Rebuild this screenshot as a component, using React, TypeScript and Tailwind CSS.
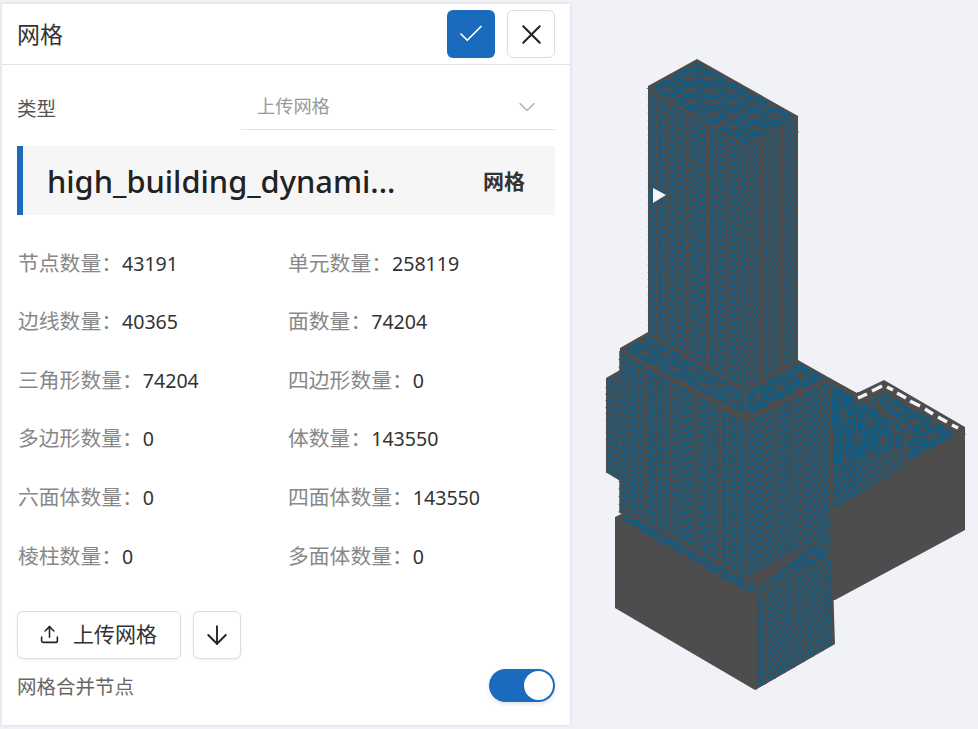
import { ArrowDown, Check, ChevronDown, Upload, X } from "lucide-react";

type P = [number, number];

const font = { fontFamily: '"Noto Sans", "Noto Sans CJK SC", sans-serif' };

const stats = [
  ["节点数量：", "43191", "单元数量：", "258119"],
  ["边线数量：", "40365", "面数量：", "74204"],
  ["三角形数量：", "74204", "四边形数量：", "0"],
  ["多边形数量：", "0", "体数量：", "143550"],
  ["六面体数量：", "0", "四面体数量：", "143550"],
  ["棱柱数量：", "0", "多面体数量：", "0"],
];

const at = (a: P, b: P, c: P, d: P, u: number, v: number): P => {
  const top: P = [a[0] + (b[0] - a[0]) * u, a[1] + (b[1] - a[1]) * u];
  const bot: P = [d[0] + (c[0] - d[0]) * u, d[1] + (c[1] - d[1]) * u];
  return [top[0] + (bot[0] - top[0]) * v, top[1] + (bot[1] - top[1]) * v];
};

const fmt = (p: P) => `${p[0].toFixed(1)} ${p[1].toFixed(1)}`;

// grid of triangles spread over a four sided face
function meshPath(a: P, b: P, c: P, d: P, nu: number, nv: number, uniform?: boolean) {
  let path = "";
  for (let i = 0; i < nu; i++) {
    for (let j = 0; j < nv; j++) {
      const p0 = at(a, b, c, d, i / nu, j / nv);
      const p1 = at(a, b, c, d, (i + 1) / nu, j / nv);
      const p2 = at(a, b, c, d, (i + 1) / nu, (j + 1) / nv);
      const p3 = at(a, b, c, d, i / nu, (j + 1) / nv);
      if (!uniform && (i + j) % 2 === 0) {
        path += `M${fmt(p0)}L${fmt(p1)}L${fmt(p2)}ZM${fmt(p0)}L${fmt(p2)}L${fmt(p3)}Z`;
      } else {
        path += `M${fmt(p0)}L${fmt(p1)}L${fmt(p3)}ZM${fmt(p1)}L${fmt(p2)}L${fmt(p3)}Z`;
      }
    }
  }
  return path;
}

function columnLines(a: P, b: P, c: P, d: P, n: number) {
  let path = "";
  for (let i = 1; i < n; i++) {
    path += `M${fmt(at(a, b, c, d, i / n, 0))}L${fmt(at(a, b, c, d, i / n, 1))}`;
  }
  return path;
}

function specks(a: P, b: P, c: P, d: P, nu: number, nv: number) {
  let path = "";
  for (let i = 1; i < nu; i++) {
    for (let j = 1; j < nv; j++) {
      const p = at(a, b, c, d, i / nu, j / nv);
      path += `M${fmt(p)}h1v1h-1Z`;
    }
  }
  return path;
}

function Face(props: { pts: P[]; nu: number; nv: number; cols?: number; sw?: number; uniform?: boolean }) {
  const [a, b, c, d] = props.pts;
  return (
    <g>
      <path d={meshPath(a, b, c, d, props.nu, props.nv, props.uniform)} fill="#0f5c85" stroke="#4d4d4d" strokeWidth={props.sw ?? 1.5} />
      {props.cols ? <path d={columnLines(a, b, c, d, props.cols)} stroke="#4d4d4d" strokeWidth={2} fill="none" /> : null}
    </g>
  );
}

function Building() {
  const gray = "#4d4d4d";
  const dashes: [P, P][] = [
    [[858, 398], [867, 394]],
    [[872, 391], [882, 386]],
    [[887, 387], [893, 390]],
    [[897, 393], [906, 398]],
    [[910, 401], [920, 406]],
    [[925, 409], [933, 414]],
    [[938, 417], [947, 422]],
    [[952, 425], [958, 428]],
  ];
  return (
    <svg viewBox="570 0 408 729" className="h-[729px] w-[408px] shrink-0">
      {/* back wing */}
      <polygon points="828,377 857,393 884,380 965,427 965,530 835,600 828,600" fill={gray} />
      <Face pts={[[866, 401], [884, 392], [958, 434], [908, 462]]} nu={3} nv={7} sw={1.6} />
      <Face pts={[[830, 383], [907, 428], [907, 447], [833, 466]]} nu={6} nv={3} sw={1.6} />
      <Face pts={[[833, 466], [907, 447], [907, 467], [833, 510]]} nu={9} nv={4} sw={1.4} uniform />
      <Face pts={[[910, 465], [958, 437], [935, 452], [910, 470]]} nu={6} nv={1} />
      <path d="M857 393L907 428V470M908 466L965 433" stroke={gray} strokeWidth={3} fill="none" />
      {dashes.map((s, i) => (
        <line key={i} x1={s[0][0]} y1={s[0][1]} x2={s[1][0]} y2={s[1][1]} stroke="#f4f5f8" strokeWidth={3.5} />
      ))}
      <path d={specks([833, 515], [965, 440], [965, 530], [835, 600], 16, 9)} fill="#2b5268" />

      {/* podium */}
      <polygon points="606,378 620,370 620,480 606,472" fill={gray} />
      <Face pts={[[607, 380], [620, 373], [620, 480], [607, 472]]} nu={2} nv={14} uniform />
      <polygon points="620,348 648,332 798,360 828,377 831,555 746,590 620,510" fill={gray} />
      <Face pts={[[622, 350], [648, 335], [746, 392], [746, 416]]} nu={3} nv={8} sw={1.6} />
      <Face pts={[[748, 416], [746, 392], [798, 362], [826, 378]]} nu={2} nv={6} sw={1.6} />
      <Face pts={[[620, 352], [746, 422], [746, 585], [620, 512]]} nu={14} nv={21} cols={5} uniform />
      <Face pts={[[746, 422], [830, 380], [831, 552], [746, 590]]} nu={9} nv={21} cols={3} uniform />

      {/* base block */}
      <polygon points="615,517 627,511 746,578 813,543 832,555 835,644 755,690 615,608" fill={gray} />
      <Face pts={[[618, 519], [628, 513], [757, 586], [750, 594]]} nu={1} nv={16} sw={1.5} />
      <Face pts={[[757, 587], [813, 544], [831, 555], [757, 596]]} nu={6} nv={2} sw={1.4} />
      <Face pts={[[757, 598], [832, 556], [833, 644], [757, 688]]} nu={8} nv={12} sw={1.4} uniform />
      <path d={specks([615, 521], [755, 598], [755, 690], [615, 608], 22, 12)} fill="#2b5268" />

      {/* tower */}
      <polygon points="648,86 697,59 798,116 798,360 746,392 648,333" fill={gray} />
      <Face pts={[[649, 88], [697, 61], [796, 117], [746, 146]]} nu={5} nv={9} sw={1.6} />
      <Face pts={[[649, 90], [746, 146], [746, 390], [649, 333]]} nu={13} nv={32} cols={5} uniform />
      <Face pts={[[746, 146], [797, 118], [797, 358], [746, 390]]} nu={7} nv={32} cols={3} uniform />
      <path d="M650 92L715 128L745 146L770 133M715 128L745 111M668 102L680 95" stroke={gray} strokeWidth={2} fill="none" />
      <line x1={746} y1={146} x2={746} y2={592} stroke={gray} strokeWidth={2} />
      <polygon points="653,188 666,195 653,203" fill="#f4f5f8" />
    </svg>
  );
}

export default function App() {
  return (
    <div className="flex h-[729px] w-[978px] overflow-hidden bg-[#f0f2f7]" style={font}>
      <div className="mb-[4px] ml-[2px] mt-[4px] flex w-[568px] shrink-0 flex-col bg-white shadow-[0_0_4px_rgba(0,0,0,0.12)]">
        <div className="flex h-[61px] items-center justify-between border-b border-[#e3e3e3] pl-[15px] pr-[15px]">
          <span className="text-[23px] text-[#333]">网格</span>
          <div className="flex gap-3">
            <button className="flex h-12 w-12 items-center justify-center rounded-md bg-[#1a6bbd] text-white">
              <Check size={30} strokeWidth={1.4} />
            </button>
            <button className="flex h-12 w-12 items-center justify-center rounded-md border border-[#dcdcdc] text-[#222]">
              <X size={33} strokeWidth={1.5} />
            </button>
          </div>
        </div>

        <div className="mt-[16px] flex pl-[15px] pr-[15px]">
          <span className="w-[224px] pt-[13px] text-[19.5px] leading-[30px] text-[#555]">类型</span>
          <div className="flex h-[49px] flex-1 items-center justify-between border-b border-[#e3e3e3] pl-[16px] pr-[14px] pt-[3px]">
            <span className="text-[18.2px] text-[#999]">上传网格</span>
            <ChevronDown size={28} strokeWidth={1} className="text-[#aaa]" />
          </div>
        </div>

        <div className="ml-[15px] mr-[15px] mt-[16px] flex h-[69px] items-center justify-between border-l-[6px] border-[#1a6bbd] bg-[#f6f6f7] pl-[24px] pr-[30px]">
          <span className="pt-[2px] text-[30.8px] font-medium text-[#222]">high_building_dynami...</span>
          <span className="pt-[2px] text-[21px] font-bold text-[#333]">网格</span>
        </div>

        <div className="mt-[19px] pl-[16px] pr-[15px]">
          {stats.map((row) => (
            <div key={row[0]} className="grid h-[58.6px] grid-cols-[270px_1fr] items-center">
              <div>
                <span className="text-[20.8px] text-[#888]">{row[0]}</span>
                <span className="text-[19.6px] text-[#333]">{row[1]}</span>
              </div>
              <div>
                <span className="text-[20.8px] text-[#888]">{row[2]}</span>
                <span className="text-[19.6px] text-[#333]">{row[3]}</span>
              </div>
            </div>
          ))}
        </div>

        <div className="mt-[25px] flex gap-3 pl-[15px]">
          <button className="flex h-12 w-[164px] items-center justify-center gap-[13px] rounded-md border border-[#dcdcdc] text-[21px] text-[#333] shadow-[0_1px_3px_rgba(0,0,0,0.06)]">
            <Upload size={21} strokeWidth={1.8} className="-ml-[2px] text-[#222]" />
            上传网格
          </button>
          <button className="flex h-12 w-12 items-center justify-center rounded-md border border-[#dcdcdc] text-[#222] shadow-[0_1px_3px_rgba(0,0,0,0.06)]">
            <ArrowDown size={30} strokeWidth={1.5} />
          </button>
        </div>

        <div className="mt-[10px] flex items-start justify-between pl-[15px] pr-[15px]">
          <span className="pt-[3px] text-[19.5px] leading-[30px] text-[#666]">网格合并节点</span>
          <div className="flex h-[33px] w-[66px] items-center justify-end rounded-full bg-[#1a6bbd] pr-[2px] shadow-[0_2px_4px_rgba(0,0,0,0.12)]">
            <div className="h-[29px] w-[29px] rounded-full bg-white" />
          </div>
        </div>
      </div>
      <Building />
    </div>
  );
}
